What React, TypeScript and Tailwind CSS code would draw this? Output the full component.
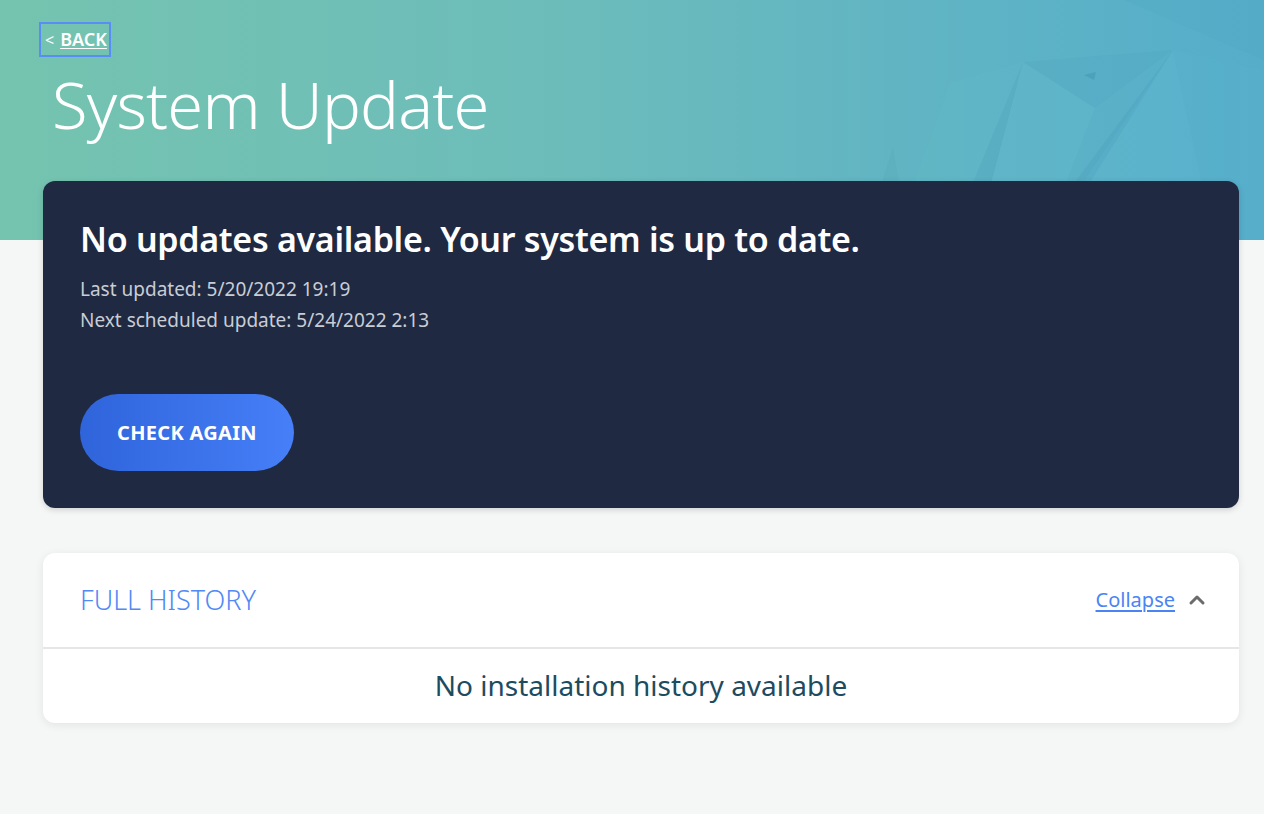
import { ChevronUp } from "lucide-react";

const font = { fontFamily: '"Noto Sans", "Open Sans", sans-serif' };

function HeaderShapes() {
  // faint low-poly triangles on the right of the banner
  return (
    <svg
      className="pointer-events-none absolute right-0 top-0 h-[240px] w-[520px]"
      viewBox="0 0 520 240"
      preserveAspectRatio="none"
    >
      <polygon points="120,240 149,147 165,240" fill="#4a9db3" opacity="0.16" />
      <polygon points="150,240 206,83 279,62 230,240" fill="#6cc3cd" opacity="0.14" />
      <polygon points="205,240 279,62 232,240" fill="#4598b3" opacity="0.18" />
      <polygon points="232,240 279,62 351,108 300,240" fill="#66bfd0" opacity="0.25" />
      <polygon points="279,62 351,108 429,50" fill="#4a9fb9" opacity="0.14" />
      <polygon points="300,240 429,50 470,240" fill="#66c0d4" opacity="0.22" />
      <polygon points="288,240 429,50 310,240" fill="#3f92ad" opacity="0.16" />
      <polygon points="429,50 520,70 520,240 470,240" fill="#58b3cf" opacity="0.2" />
      <polygon points="340,75 352,72 350,80" fill="#3a8ca8" opacity="0.35" />
      <polygon points="380,0 520,0 520,60 450,30" fill="#4a9fbf" opacity="0.15" />
    </svg>
  );
}

export default function App() {
  return (
    <div
      style={font}
      className="relative min-h-screen bg-[#f5f6f6] bg-[linear-gradient(90deg,#75c4af_0%,#6cbcbb_45%,#55adcb_100%)] bg-[length:100%_240px] bg-no-repeat pb-16 pl-[43px] pr-[25px] pt-[22px]"
    >
      <HeaderShapes />
      <div className="relative">
        <a
          href="#"
          className="-ml-[4px] inline-flex h-[35px] items-center gap-[6px] pl-[6px] pr-[4px] text-[18px] font-semibold text-white outline outline-2 -outline-offset-2 outline-[#5a8cf6]"
        >
          <span className="text-[16px] font-normal">&lt;</span>
          <span className="underline underline-offset-2">BACK</span>
        </a>

        <h1 className="ml-[9px] mt-[15px] text-[65px] font-light leading-none tracking-[-0.8px] text-white">
          System Update
        </h1>

        <section className="mt-[44px] rounded-[12px] bg-[#1f2942] px-[37px] pb-[37px] pt-[38px] shadow-[0_2px_6px_rgba(0,0,0,0.15)]">
          <h2 className="text-[34px] font-semibold leading-[40px] tracking-[-0.3px] text-white">
            No updates available. Your system is up to date.
          </h2>
          <div className="mt-[15px] text-[19px] leading-[31px] text-[#c9cdd5]">
            <p>Last updated: 5/20/2022 19:19</p>
            <p>Next scheduled update: 5/24/2022 2:13</p>
          </div>
          <button className="mt-[58px] flex h-[77px] w-[214px] items-center justify-center rounded-full bg-[linear-gradient(90deg,#2f64db,#467ff8)] text-[20px] font-bold tracking-[0.3px] text-white">
            CHECK AGAIN
          </button>
        </section>

        <section className="mt-[45px] overflow-hidden rounded-[12px] bg-white shadow-[0_2px_10px_rgba(0,0,0,0.08)]">
          <div className="flex h-[96px] items-center justify-between border-b-2 border-[#e6e6e6] pl-[37px] pr-[30px]">
            <h3 className="text-[27px] font-light text-[#5189f6]">FULL HISTORY</h3>
            <div className="flex items-center gap-[10px]">
              <a href="#" className="text-[20px] text-[#4a84f4] underline underline-offset-[3px]">
                Collapse
              </a>
              <ChevronUp className="h-[24px] w-[24px] text-[#6b6b6b]" strokeWidth={3} />
            </div>
          </div>
          <p className="flex h-[74px] items-center justify-center pb-[2px] text-[28px] text-[#1d4b60]">
            No installation history available
          </p>
        </section>
      </div>
    </div>
  );
}
